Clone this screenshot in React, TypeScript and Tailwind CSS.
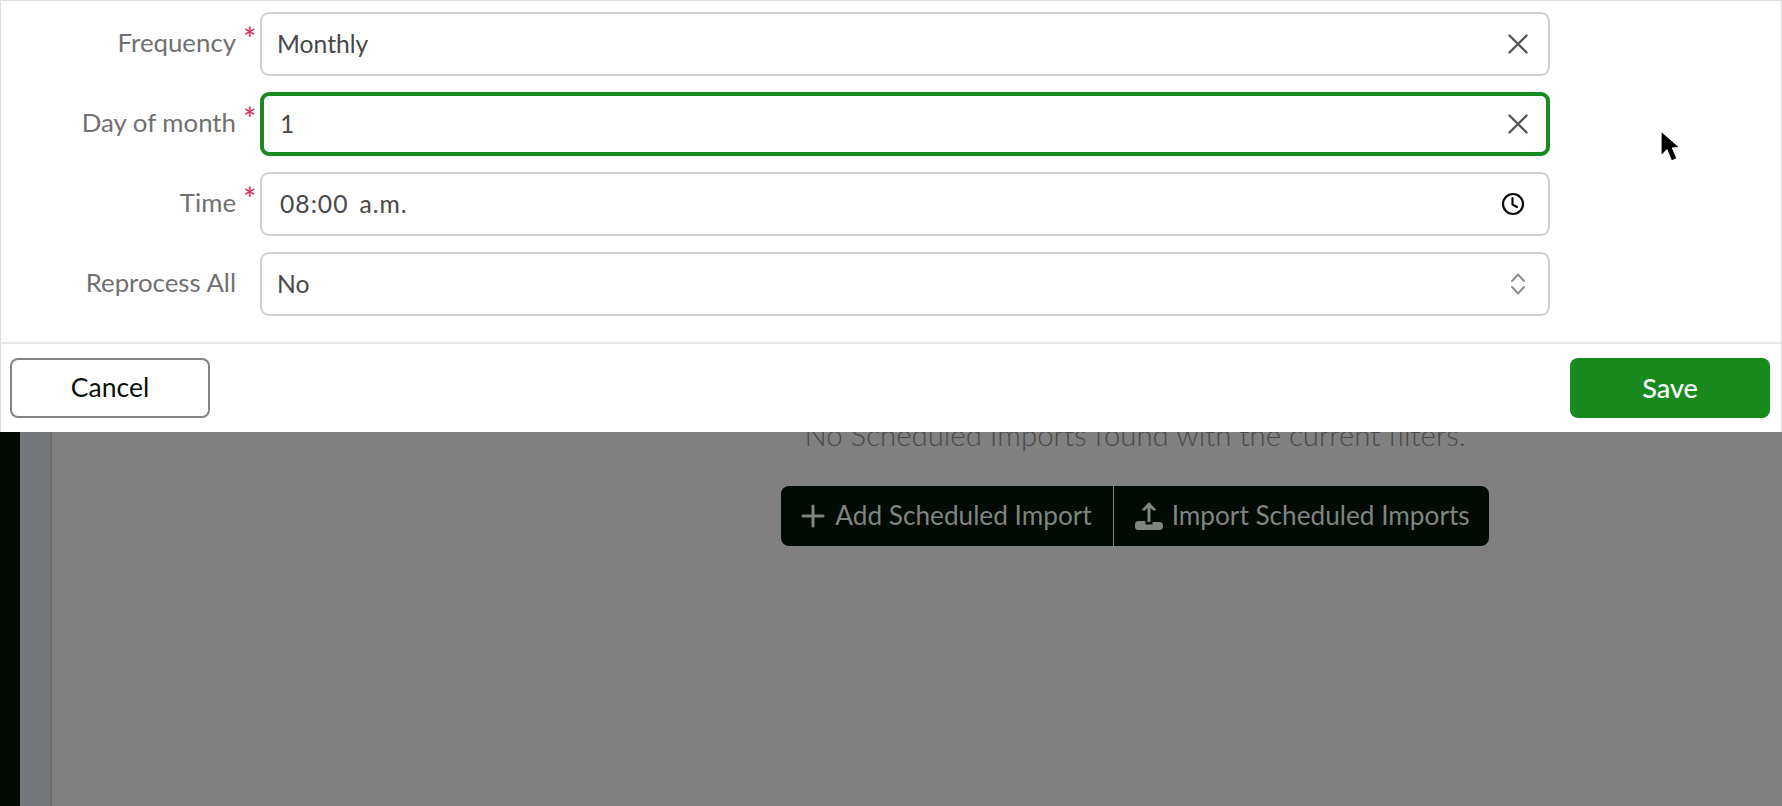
const font = { fontFamily: '"Lato", "Open Sans", sans-serif' };

function XIcon() {
  return (
    <svg width="22" height="22" viewBox="0 0 22 22" fill="none" stroke="#555" strokeWidth="2.4" strokeLinecap="round">
      <path d="M2.5 2.5 L19.5 19.5 M19.5 2.5 L2.5 19.5" />
    </svg>
  );
}

function ClockIcon() {
  return (
    <svg width="24" height="24" viewBox="0 0 24 24" fill="none" stroke="#0a0a0a" strokeWidth="2.2" strokeLinecap="round" strokeLinejoin="round">
      <circle cx="12" cy="12" r="10" />
      <path d="M11.5 6 V12.5 L16 15" />
    </svg>
  );
}

function UpDownIcon() {
  return (
    <svg width="16" height="24" viewBox="0 0 16 24" fill="none" stroke="#8f8f8f" strokeWidth="2" strokeLinecap="round" strokeLinejoin="round">
      <path d="M2 9 L8 2.5 L14 9" />
      <path d="M2 15 L8 21.5 L14 15" />
    </svg>
  );
}

function Field({ label, required, children, icon, focused }: { label: string; required?: boolean; children: React.ReactNode; icon: React.ReactNode; focused?: boolean }) {
  return (
    <div className="flex items-center h-[64px]">
      <div className="w-[235px] shrink-0 flex justify-end text-[25.8px] text-[#707070] -mt-[3px]">{label}</div>
      <div className="w-[24px] shrink-0 h-full text-[#d1345b] text-[32px] leading-[32px] pl-[7px] pt-[11px]">{required ? "*" : ""}</div>
      <div
        className={
          focused
            ? "w-[1290px] h-full rounded-[9px] bg-white flex items-center justify-between border-[4px] border-[#1a8a1f] pl-[15px] pr-[17px]"
            : "w-[1290px] h-full rounded-[9px] bg-white flex items-center justify-between border-[2px] border-[#cfd0d3] pl-[15px] pr-[19px]"
        }
      >
        <span className="text-[24.7px] text-[#484848]">{children}</span>
        {icon}
      </div>
    </div>
  );
}

export default function App() {
  return (
    <div className="relative w-full h-[806px] overflow-hidden bg-[#808080] flex" style={font}>
      <div className="w-[20px] shrink-0 bg-[#010a03]" />
      <div className="w-[32px] shrink-0 bg-[#75777a] border-r-[2px] border-[#6e6f70]" />
      <div className="flex-1 flex flex-col items-center pt-[418px] pl-[436px]">
        <p className="text-[29.4px] leading-[34px] text-[#4a4a4a] font-light whitespace-nowrap">No Scheduled Imports found with the current filters.</p>
        <div className="mt-[34px] flex h-[60px] rounded-[8px] bg-[#010a03] text-[26.2px] text-[#7f8580] whitespace-nowrap">
          <div className="flex items-center gap-[10px] pl-[20px] pr-[21px] border-r border-[#7f8580]">
            <svg width="24" height="24" viewBox="0 0 24 24" fill="none" stroke="#7f8580" strokeWidth="3" strokeLinecap="round">
              <path d="M12 2 V22 M2 12 H22" />
            </svg>
            <span>Add Scheduled Import</span>
          </div>
          <div className="flex items-center gap-[8px] pl-[20px] pr-[19px]">
            <svg width="30" height="30" viewBox="0 0 30 30" fill="#7f8580">
              <path d="M15 1 L22.5 9 L19.5 9.8 L16.5 7 V21 H13.5 V7 L10.5 9.8 L7.5 9 Z" />
              <path d="M4.5 20 H11.5 V23.5 H18.5 V21 H25.5 A3.5 3.5 0 0 1 29 24.5 V25.5 A3.5 3.5 0 0 1 25.5 29 H4.5 A3.5 3.5 0 0 1 1 25.5 V23.5 A3.5 3.5 0 0 1 4.5 20 Z" />
            </svg>
            <span>Import Scheduled Imports</span>
          </div>
        </div>
      </div>

      <div className="absolute top-0 left-0 w-full h-[432px] bg-white border border-[#dcdcdc] border-b-0 flex flex-col">
        <div className="flex flex-col gap-[16px] pt-[11px] h-[341px] shrink-0">
          <Field label="Frequency" required icon={<XIcon />}>Monthly</Field>
          <Field label="Day of month" required icon={<XIcon />} focused>
            <span className="pl-[1px]">1</span>
          </Field>
          <Field label="Time" required icon={<span className="pr-[4px] flex"><ClockIcon /></span>}>
            <span className="pl-[3px] tracking-[1px] flex gap-[11px] -mt-[1px]"><span>08:00</span><span>a.m.</span></span>
          </Field>
          <Field label="Reprocess All" icon={<span className="pr-[3px] flex"><UpDownIcon /></span>}>No</Field>
        </div>
        <div className="flex-1 border-t-[2px] border-[#e6e6e6] flex items-start justify-between pt-[14px] pl-[9px] pr-[11px]">
          <div className="w-[200px] h-[60px] rounded-[8px] border-[2px] border-[#808582] flex items-center justify-center text-[26.5px] text-[#0a0f0a]">Cancel</div>
          <div className="w-[200px] h-[60px] rounded-[8px] bg-[#1a8a1f] flex items-center justify-center text-[27px] font-medium text-white">Save</div>
        </div>
      </div>

      <svg className="absolute left-[1659px] top-[129px]" width="24" height="36" viewBox="0 0 24 36">
        <path d="M2 2 L2 27 L8 21 L12.5 32 L18 29.5 L13.5 19 L21 18.5 Z" fill="#000" stroke="#fff" strokeWidth="1.2" strokeLinejoin="round" />
      </svg>
    </div>
  );
}
